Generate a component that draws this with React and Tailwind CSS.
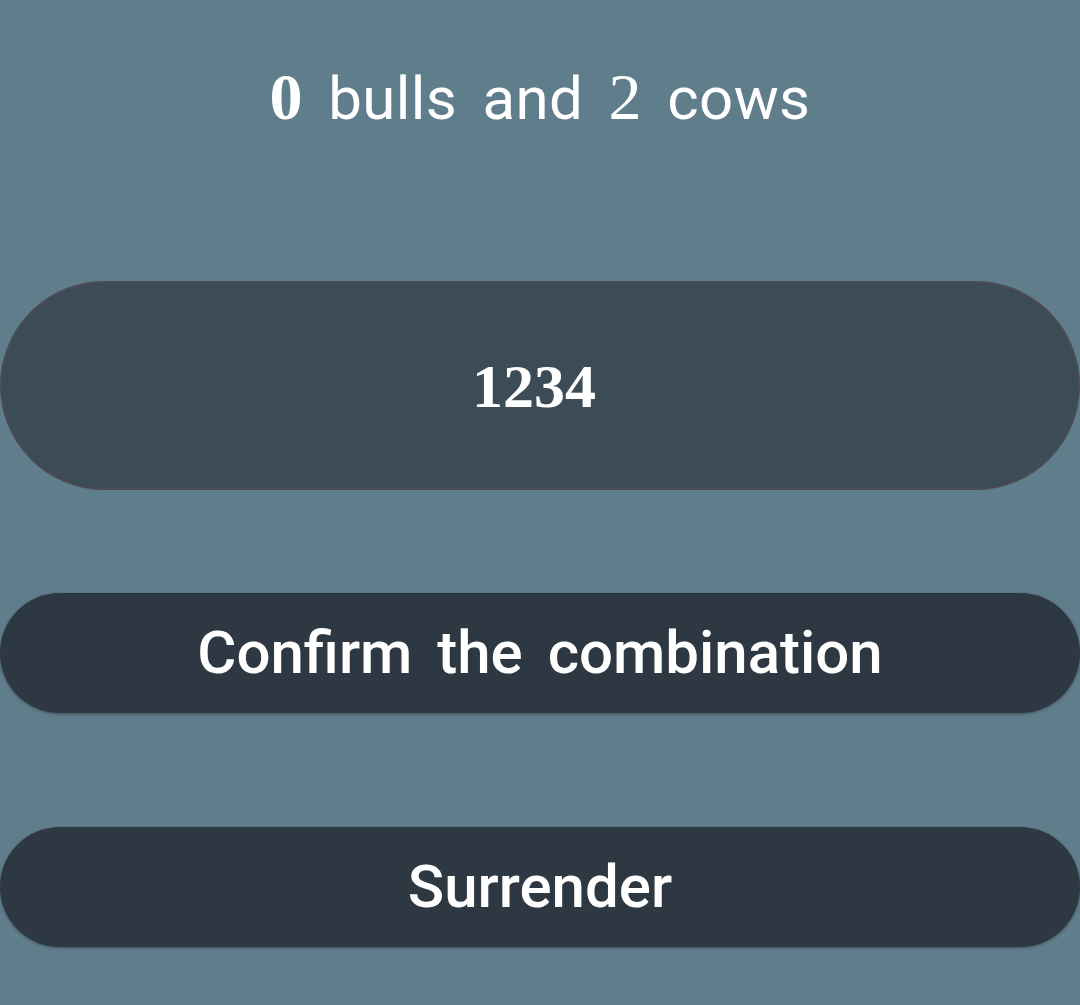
import React from 'react';

const App = () => {
  return (
    <div className="min-h-[1005px] w-[1080px] bg-[#607d8b] flex flex-col font-['Roboto',sans-serif] text-white">
      <div className="h-[200px] flex items-center justify-center">
        <h1 className="text-[60px] leading-none tracking-[0.4px] [word-spacing:10px] pb-[6px]">
          <span className="font-['Liberation_Serif',serif] font-bold text-[66px]">0</span> bulls and{' '}
          <span className="font-['Liberation_Serif',serif] text-[66px]">2</span> cows
        </h1>
      </div>

      <div className="mt-[81px] h-[209px] rounded-full bg-[#3c4c57] border-2 border-[#4b4a55] flex items-center justify-center">
        <span className="text-[62px] leading-none font-['Liberation_Serif',serif] font-bold pr-[12px]">1234</span>
      </div>

      <button className="mt-[103px] h-[120px] rounded-full bg-[#2e3842] shadow-[0_1px_3px_rgba(0,0,0,0.35)] flex items-center justify-center text-[60px] font-medium leading-none [word-spacing:10px]">
        Confirm the combination
      </button>

      <button className="mt-[114px] h-[120px] rounded-full bg-[#2e3842] shadow-[0_1px_3px_rgba(0,0,0,0.35)] flex items-center justify-center text-[60px] font-medium leading-none">
        Surrender
      </button>
    </div>
  );
};

export default App;
